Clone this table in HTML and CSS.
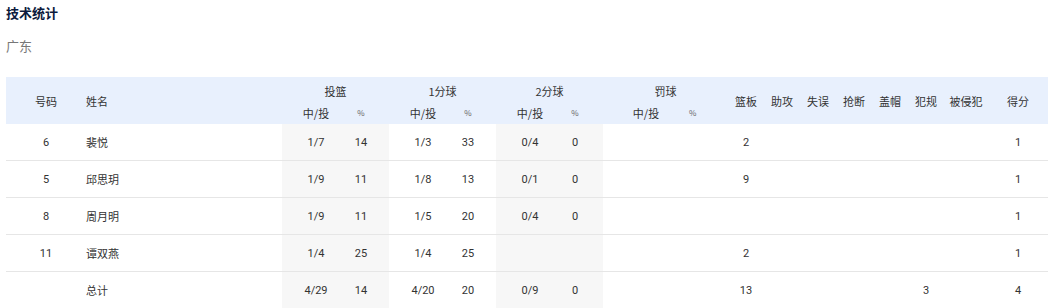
FILE: index.html
```html
<!DOCTYPE html>
<html lang="zh-CN">
<head>
<meta charset="utf-8">
<title>技术统计</title>
<link rel="stylesheet" href="styles.css">
</head>
<body>
<h1 class="title">技术统计</h1>
<div class="team">广东</div>
<div class="stats">
  <div class="head">
    <div class="h-span c-no">号码</div>
    <div class="h-span c-name">姓名</div>
    <div class="h-group g1">投篮</div>
    <div class="h-group g2">1分球</div>
    <div class="h-group g3">2分球</div>
    <div class="h-group g4">罚球</div>
    <div class="h-sub">中/投</div><div class="h-sub pct">%</div>
    <div class="h-sub">中/投</div><div class="h-sub pct">%</div>
    <div class="h-sub">中/投</div><div class="h-sub pct">%</div>
    <div class="h-sub">中/投</div><div class="h-sub pct pct-ft">%</div>
    <div class="h-span c11">篮板</div>
    <div class="h-span c12">助攻</div>
    <div class="h-span c13">失误</div>
    <div class="h-span c14">抢断</div>
    <div class="h-span c15">盖帽</div>
    <div class="h-span c16">犯规</div>
    <div class="h-span c17">被侵犯</div>
    <div class="h-span c18">得分</div>
  </div>

  <div class="row">
    <div class="cell num">6</div><div class="cell name">裴悦</div>
    <div class="cell shade">1/7</div><div class="cell shade pc">14</div>
    <div class="cell">1/3</div><div class="cell pc">33</div>
    <div class="cell shade">0/4</div><div class="cell shade pc">0</div>
    <div class="cell"></div><div class="cell"></div>
    <div class="cell">2</div><div class="cell"></div><div class="cell"></div><div class="cell"></div><div class="cell"></div><div class="cell"></div><div class="cell"></div><div class="cell">1</div>
  </div>
  <div class="row">
    <div class="cell num">5</div><div class="cell name">邱思玥</div>
    <div class="cell shade">1/9</div><div class="cell shade pc">11</div>
    <div class="cell">1/8</div><div class="cell pc">13</div>
    <div class="cell shade">0/1</div><div class="cell shade pc">0</div>
    <div class="cell"></div><div class="cell"></div>
    <div class="cell">9</div><div class="cell"></div><div class="cell"></div><div class="cell"></div><div class="cell"></div><div class="cell"></div><div class="cell"></div><div class="cell">1</div>
  </div>
  <div class="row">
    <div class="cell num">8</div><div class="cell name">周月明</div>
    <div class="cell shade">1/9</div><div class="cell shade pc">11</div>
    <div class="cell">1/5</div><div class="cell pc">20</div>
    <div class="cell shade">0/4</div><div class="cell shade pc">0</div>
    <div class="cell"></div><div class="cell"></div>
    <div class="cell"></div><div class="cell"></div><div class="cell"></div><div class="cell"></div><div class="cell"></div><div class="cell"></div><div class="cell"></div><div class="cell">1</div>
  </div>
  <div class="row">
    <div class="cell num">11</div><div class="cell name">谭双燕</div>
    <div class="cell shade">1/4</div><div class="cell shade pc">25</div>
    <div class="cell">1/4</div><div class="cell pc">25</div>
    <div class="cell shade"></div><div class="cell shade pc"></div>
    <div class="cell"></div><div class="cell"></div>
    <div class="cell">2</div><div class="cell"></div><div class="cell"></div><div class="cell"></div><div class="cell"></div><div class="cell"></div><div class="cell"></div><div class="cell">1</div>
  </div>
  <div class="row last">
    <div class="cell num"></div><div class="cell name">总计</div>
    <div class="cell shade">4/29</div><div class="cell shade pc">14</div>
    <div class="cell">4/20</div><div class="cell pc">20</div>
    <div class="cell shade">0/9</div><div class="cell shade pc">0</div>
    <div class="cell"></div><div class="cell"></div>
    <div class="cell">13</div><div class="cell"></div><div class="cell"></div><div class="cell"></div><div class="cell"></div><div class="cell">3</div><div class="cell"></div><div class="cell">4</div>
  </div>
</div>
</body>
</html>
```
FILE: styles.css
```css
html, body {
  margin: 0;
  padding: 0;
  background: #ffffff;
}
body {
  padding: 3px 0 0 6px;
  width: 1042px;
  font-family: Roboto, "Noto Sans CJK SC", sans-serif;
  color: #333333;
  overflow: hidden;
}
.title {
  margin: 0;
  font-size: 13px;
  line-height: 20px;
  font-weight: 700;
  color: #0c1a3c;
  font-family: "Noto Sans CJK SC", sans-serif;
}
.team {
  margin-top: 13px;
  font-size: 13px;
  line-height: 20px;
  color: #777777;
  font-family: "Noto Sans CJK SC", sans-serif;
}
.stats {
  margin-top: 21px;
}
.head, .row {
  display: grid;
  grid-template-columns: 80px 196px 68px 39px 68px 39px 68px 39px 86px 39px 36px 36px 36px 36px 36px 36px 44px 60px;
}
.head {
  grid-template-rows: 27px 20px;
  background: #e8f0fd;
  font-family: "Noto Sans CJK SC", sans-serif;
  font-size: 11px;
  color: #333333;
}
.head > div {
  display: flex;
  align-items: center;
  justify-content: center;
  white-space: nowrap;
}
.h-span { grid-row: 1 / 3; }
.c-no { grid-column: 1; }
.c-name { grid-column: 2; justify-content: flex-start !important; }
.g1 { grid-column: 3 / 5; }
.g2 { grid-column: 5 / 7; }
.g3 { grid-column: 7 / 9; }
.g4 { grid-column: 9 / 11; }
.c11 { grid-column: 11; }
.c12 { grid-column: 12; }
.c13 { grid-column: 13; }
.c14 { grid-column: 14; }
.c15 { grid-column: 15; }
.c16 { grid-column: 16; }
.c17 { grid-column: 17; }
.c18 { grid-column: 18; }
.h-group { grid-row: 1; padding-top: 1px; }
.h-sub { grid-row: 2; padding-bottom: 3px; }
.h-sub.pct {
  font-size: 8px;
  color: #666666;
  padding-right: 17px;
}
.h-sub.pct-ft {
  justify-content: flex-start !important;
  padding-right: 0;
  padding-left: 0;
}
.row {
  height: 36px;
  border-bottom: 1px solid #e6e6e6;
  font-size: 11px;
  color: #333333;
}
.row.last {
  border-bottom: none;
}
.cell {
  display: flex;
  align-items: center;
  justify-content: center;
  white-space: nowrap;
}
.cell.name {
  justify-content: flex-start;
  font-family: "Noto Sans CJK SC", sans-serif;
}
.cell.pc {
  padding-right: 17px;
}
.cell.shade {
  background: #f7f7f7;
}
```
